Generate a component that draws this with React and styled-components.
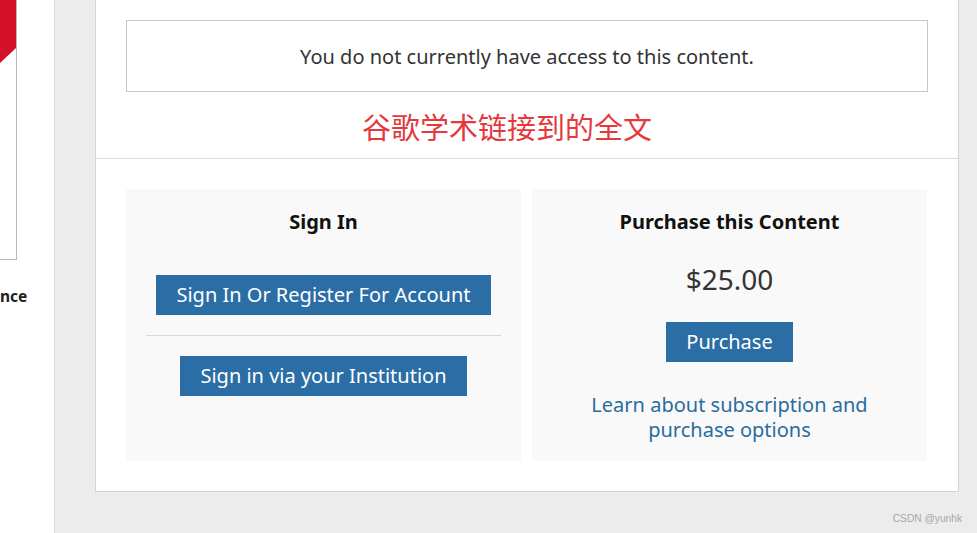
import React from "react";
import styled, { createGlobalStyle } from "styled-components";

const GlobalStyle = createGlobalStyle`
  html, body {
    margin: 0;
    padding: 0;
    background: #ececec;
    font-family: "Noto Sans", "Open Sans", "Noto Sans CJK SC", sans-serif;
  }
`;

const Page = styled.div`
  display: flex;
  height: 533px;
  overflow: hidden;
`;

const LeftColumn = styled.div`
  width: 54px;
  flex-shrink: 0;
  background: #fff;
  border-right: 1px solid #dcdcdc;
`;

const Cover = styled.div`
  width: 16px;
  height: 259px;
  border-right: 1px solid #b8b8b8;
  border-bottom: 1px solid #b8b8b8;
  background: #fff;

  svg {
    display: block;
  }
`;

const SideLabel = styled.div`
  margin-top: 26px;
  font-size: 15.5px;
  font-weight: 700;
  color: #222;
  line-height: 20px;
`;

const Content = styled.div`
  flex: 1;
  padding-left: 40px;
`;

const Panel = styled.div`
  width: 862px;
  background: #fff;
  border: 1px solid #d4d4d4;
  border-top: none;
`;

const Top = styled.div`
  padding: 20px 30px 0;
  border-bottom: 1px solid #dcdcdc;
`;

const Notice = styled.div`
  height: 70px;
  border: 1px solid #c8c8c8;
  display: flex;
  align-items: center;
  justify-content: center;
  font-size: 20px;
  color: #333;
`;

const Annotation = styled.div`
  text-align: center;
  font-family: "Noto Sans CJK SC", sans-serif;
  font-size: 29px;
  line-height: 40px;
  color: #e5383b;
  padding: 14px 40px 12px 0;
`;

const Cards = styled.div`
  display: grid;
  grid-template-columns: 395px 395px;
  gap: 11px;
  padding: 30px 30px 30px;
`;

const Card = styled.div`
  background: #f9f9f9;
  height: 272px;
  padding: 20px 20px 0;
  box-sizing: border-box;
  display: flex;
  flex-direction: column;
  align-items: center;
`;

const CardTitle = styled.div`
  font-size: 20px;
  font-weight: 700;
  line-height: 26px;
  color: #111;
`;

const Button = styled.button`
  margin-top: ${(p) => p.$top}px;
  height: 40px;
  padding: 0 20px;
  border: none;
  background: #2b6ea5;
  color: #fff;
  font-family: inherit;
  font-size: 20px;
  line-height: 26px;
  cursor: pointer;
`;

const Divider = styled.hr`
  align-self: stretch;
  margin: 20px 0 0;
  border: none;
  border-top: 1px solid #d8d8d8;
`;

const Price = styled.div`
  margin-top: 26px;
  font-size: 28px;
  line-height: 36px;
  color: #333;
`;

const LearnLink = styled.a`
  margin-top: 30px;
  font-size: 20px;
  line-height: 25px;
  color: #2a6c9c;
  text-align: center;
  text-decoration: none;
  cursor: pointer;
`;

const Watermark = styled.div`
  position: absolute;
  right: 15px;
  bottom: 9px;
  font-family: "Liberation Sans", Arial, sans-serif;
  font-size: 10.2px;
  color: #a8a8a8;
`;

export default function App() {
  return (
    <>
      <GlobalStyle />
      <Page>
        <LeftColumn>
          <Cover>
            <svg width="16" height="64" viewBox="0 0 16 64">
              <polygon points="0,0 16,0 16,48 0,63" fill="#d4102a" />
            </svg>
          </Cover>
          <SideLabel>nce</SideLabel>
        </LeftColumn>
        <Content>
          <Panel>
            <Top>
              <Notice>You do not currently have access to this content.</Notice>
              <Annotation>谷歌学术链接到的全文</Annotation>
            </Top>
            <Cards>
              <Card>
                <CardTitle>Sign In</CardTitle>
                <Button $top={40}>Sign In Or Register For Account</Button>
                <Divider />
                <Button $top={20}>Sign in via your Institution</Button>
              </Card>
              <Card>
                <CardTitle>Purchase this Content</CardTitle>
                <Price>$25.00</Price>
                <Button $top={25}>Purchase</Button>
                <LearnLink>
                  Learn about subscription and
                  <br />
                  purchase options
                </LearnLink>
              </Card>
            </Cards>
          </Panel>
        </Content>
        <Watermark>CSDN @yunhk</Watermark>
      </Page>
    </>
  );
}
